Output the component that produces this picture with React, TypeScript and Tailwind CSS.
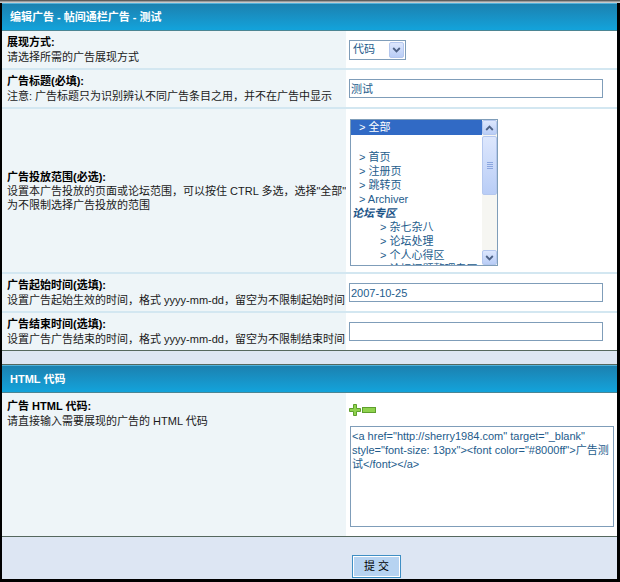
import React from "react";

const Chevron = ({ up = false }: { up?: boolean }) => (
  <svg width="9" height="6" viewBox="0 0 9 6">
    <path
      d={up ? "M1.2 5 L4.5 1.6 L7.8 5" : "M1.2 1 L4.5 4.4 L7.8 1"}
      fill="none"
      stroke="#4d6185"
      strokeWidth="1.8"
    />
  </svg>
);

const XPButton = ({ children, className }: { children?: React.ReactNode; className: string }) => (
  <div
    className={
      "flex items-center justify-center border border-[#b4c7ee] rounded-[2px] bg-linear-to-b from-[#dde7fd] to-[#b9cdf6] " +
      className
    }
  >
    {children}
  </div>
);

const Header = ({ title }: { title: string }) => (
  <div className="h-[28px] shrink-0 border-t border-t-[#52b2dc] border-b border-b-[#4b8593] bg-linear-to-b from-[#1b81b0] to-[#12a3db] pl-[8px] flex items-center text-white font-bold text-[11px]">
    {title}
  </div>
);

const Sep = () => <div className="h-[2px] shrink-0 bg-[#d3e7f1]" />;

const Label = ({ title, lines }: { title: string; lines: string[] }) => (
  <>
    <div className="font-bold text-black">{title}</div>
    {lines.map((l, i) => (
      <div key={i} className="text-[#1a1a1a]">
        {l}
      </div>
    ))}
  </>
);

const TextBox = ({ value }: { value: string }) => (
  <div className="w-[254px] h-[19px] border border-[#7f9db9] bg-white flex items-center pl-[1px] text-[#245c8c] text-[11px] leading-[14px]">
    {value}
  </div>
);

const listItems: { text: string; cls: string }[] = [
  { text: "> 首页", cls: "pl-[8px]" },
  { text: "> 注册页", cls: "pl-[8px]" },
  { text: "> 跳转页", cls: "pl-[8px]" },
  { text: "> Archiver", cls: "pl-[8px]" },
  { text: "论坛专区", cls: "pl-[1px] font-bold italic text-[#1d5588]" },
  { text: "> 杂七杂八", cls: "pl-[29px]" },
  { text: "> 论坛处理", cls: "pl-[29px]" },
  { text: "> 个人心得区", cls: "pl-[29px]" },
  { text: "> 论坛问题整理专区", cls: "pl-[29px]" },
];

export default function App() {
  return (
    <div className="w-[620px] h-[582px] bg-black font-['Liberation_Sans','Noto_Sans_CJK_SC',sans-serif] text-[11px] leading-[15px] text-black overflow-hidden">
      <div className="h-[1px] bg-[#5e5e5e]" />
      <div className="h-[1px] bg-[#9c9c9c]" />
      <div className="h-[1px] bg-[#c6cacd]" />
      <div className="ml-[2px] mr-[3px] h-[576px] bg-[#dde6f3] flex flex-col">
        <Header title="编辑广告 - 帖间通栏广告 - 测试" />

        {/* Row 1 */}
        <div className="flex h-[37px] shrink-0">
          <div className="w-[344px] bg-[#eef5f8] pl-[5px] flex flex-col justify-center whitespace-nowrap">
            <Label title="展现方式:" lines={["请选择所需的广告展现方式"]} />
          </div>
          <div className="flex-1 bg-white pl-[3px] flex items-center">
            <div className="w-[57px] h-[20px] border border-[#7f9db9] bg-white flex items-center">
              <span className="flex-1 pl-[3px] text-[#245c8c]">代码</span>
              <XPButton className="w-[15px] h-[16px] mr-[1px]">
                <Chevron />
              </XPButton>
            </div>
          </div>
        </div>
        <Sep />

        {/* Row 2 */}
        <div className="flex h-[37px] shrink-0">
          <div className="w-[344px] bg-[#eef5f8] pl-[5px] flex flex-col justify-center whitespace-nowrap">
            <Label
              title="广告标题(必填):"
              lines={["注意: 广告标题只为识别辨认不同广告条目之用，并不在广告中显示"]}
            />
          </div>
          <div className="flex-1 bg-white pl-[3px] flex items-center">
            <TextBox value="测试" />
          </div>
        </div>
        <Sep />

        {/* Row 3 */}
        <div className="flex h-[163px] shrink-0">
          <div className="w-[344px] bg-[#eef5f8] pl-[5px] flex flex-col justify-center whitespace-nowrap leading-[14px]">
            <Label
              title="广告投放范围(必选):"
              lines={["设置本广告投放的页面或论坛范围，可以按住 CTRL 多选，选择\"全部\"", "为不限制选择广告投放的范围"]}
            />
          </div>
          <div className="flex-1 bg-white pl-[4px] pt-[10px] flex items-start">
            <div className="w-[148px] h-[147px] border border-[#7f9db9] bg-white flex overflow-hidden">
              <div className="flex-1 overflow-hidden text-[#245c8c] text-[11px] leading-[14px] whitespace-nowrap">
                <div className="h-[15px] leading-[15px] bg-[#316ac5] text-white pl-[8px]">&gt; 全部</div>
                <div className="h-[15px]" />
                {listItems.map((it, i) => (
                  <div key={i} className={"h-[14px] " + it.cls}>
                    {it.text}
                  </div>
                ))}
              </div>
              <div className="w-[15px] flex flex-col bg-[#f6f6f2]">
                <XPButton className="h-[15px] w-[15px]">
                  <Chevron up />
                </XPButton>
                <XPButton className="h-[59px] w-[15px] mt-[1px] flex-col gap-[1px]">
                  <div className="w-[6px] h-[1px] bg-[#8ba6df]" />
                  <div className="w-[6px] h-[1px] bg-[#8ba6df]" />
                  <div className="w-[6px] h-[1px] bg-[#8ba6df]" />
                  <div className="w-[6px] h-[1px] bg-[#8ba6df]" />
                </XPButton>
                <div className="flex-1" />
                <XPButton className="h-[15px] w-[15px]">
                  <Chevron />
                </XPButton>
              </div>
            </div>
          </div>
        </div>
        <Sep />

        {/* Row 4 */}
        <div className="flex h-[37px] shrink-0">
          <div className="w-[344px] bg-[#eef5f8] pl-[5px] flex flex-col justify-center whitespace-nowrap">
            <Label
              title="广告起始时间(选填):"
              lines={["设置广告起始生效的时间，格式 yyyy-mm-dd，留空为不限制起始时间"]}
            />
          </div>
          <div className="flex-1 bg-white pl-[3px] flex items-center">
            <TextBox value="2007-10-25" />
          </div>
        </div>
        <Sep />

        {/* Row 5 */}
        <div className="flex h-[37px] shrink-0">
          <div className="w-[344px] bg-[#eef5f8] pl-[5px] flex flex-col justify-center whitespace-nowrap">
            <Label
              title="广告结束时间(选填):"
              lines={["设置广告广告结束的时间，格式 yyyy-mm-dd，留空为不限制结束时间"]}
            />
          </div>
          <div className="flex-1 bg-white pl-[3px] flex items-center">
            <TextBox value="" />
          </div>
        </div>
        <div className="h-[1px] shrink-0 bg-[#55685e]" />

        <div className="h-[13px] shrink-0" />

        <div className="h-[1px] shrink-0 bg-[#55685e]" />
        <Header title="HTML 代码" />

        {/* HTML row */}
        <div className="flex h-[143px] shrink-0">
          <div className="w-[344px] bg-[#eef5f8] pl-[5px] pt-[6px] flex flex-col whitespace-nowrap">
            <Label title="广告 HTML 代码:" lines={["请直接输入需要展现的广告的 HTML 代码"]} />
          </div>
          <div className="flex-1 bg-white pl-[4px] pt-[11px] flex flex-col">
            <div className="flex items-center h-[12px] -ml-[1px]">
              <svg width="28" height="12" viewBox="0 0 28 12">
                <path
                  d="M4.5 0.5 H7.5 V4.5 H11.5 V7.5 H7.5 V11.5 H4.5 V7.5 H0.5 V4.5 H4.5 Z"
                  fill="#8fd24e"
                  stroke="#5e9f2c"
                  strokeWidth="1"
                />
                <rect x="13.5" y="3.5" width="13" height="5" fill="#8fd24e" stroke="#5e9f2c" strokeWidth="1" />
              </svg>
            </div>
            <div className="mt-[10px] w-[264px] h-[101px] border border-[#7f9db9] bg-white pl-[1px] pt-[2px] text-[#245c8c] text-[11px] leading-[14px] whitespace-nowrap overflow-hidden">
              <div>&lt;a href="http://sherry1984.com" target="_blank"</div>
              <div>style="font-size: 13px"&gt;&lt;font color="#8000ff"&gt;广告测</div>
              <div>试&lt;/font&gt;&lt;/a&gt;</div>
            </div>
          </div>
        </div>
        <div className="h-[1px] shrink-0 bg-[#55685e]" />

        {/* Footer */}
        <div className="flex-1 pl-[350px] pt-[18px]">
          <div className="w-[49px] h-[23px] border border-[#3f8fc4] shadow-[inset_0_0_0_1px_#ffffff] bg-[#b6d3f1] flex items-center justify-center text-black text-[11px]">
            提 交
          </div>
        </div>
      </div>
    </div>
  );
}
